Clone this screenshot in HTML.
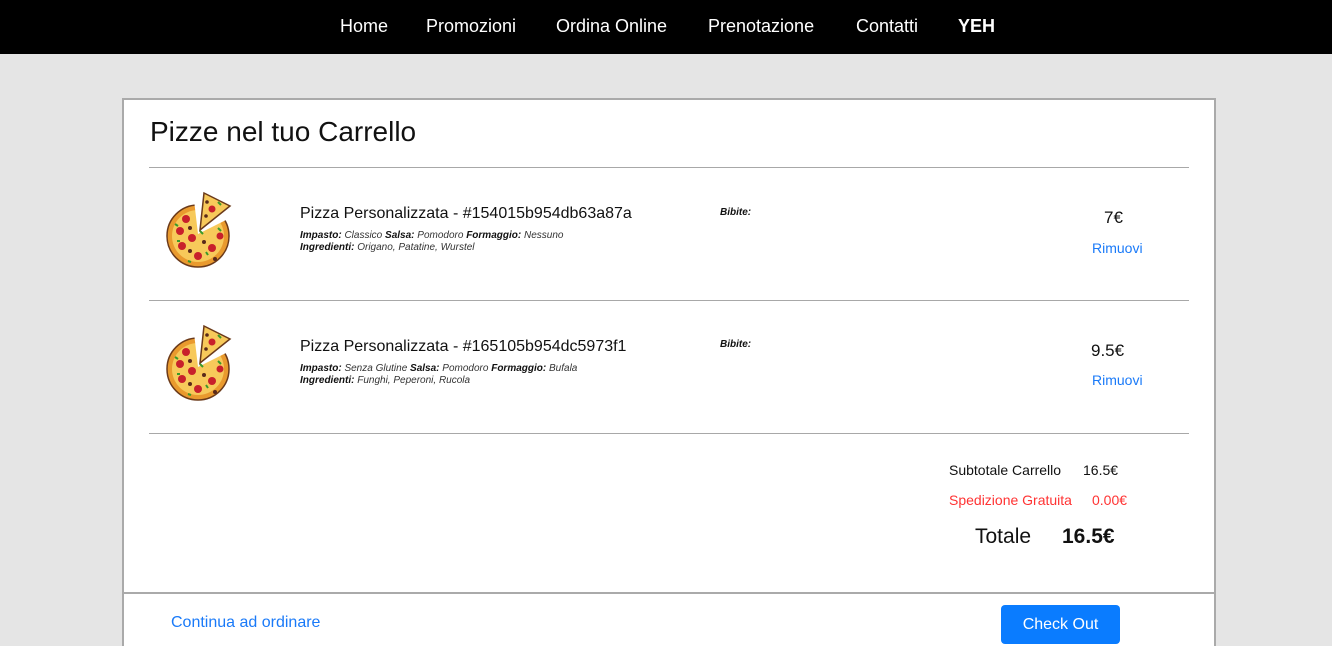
<!DOCTYPE html>
<html style="width:1332px;height:646px;overflow:hidden"><head><meta charset="utf-8"><style>
*{margin:0;padding:0;box-sizing:border-box}
body{width:1332px;height:646px;background:#e5e5e5;font-family:"Liberation Sans",sans-serif;position:relative;overflow:hidden}
.nav{position:absolute;left:0;top:0;width:1332px;height:54px;background:#000}
.nav span{position:absolute;top:16px;color:#fff;font-size:18px}
.card{position:absolute;left:122px;top:98px;width:1094px;height:548px;background:#fff;border:2px solid #aaa;border-bottom:none}
.abs{position:absolute}
.hr{position:absolute;left:149px;width:1040px;height:1px;background:#a8a8a8}
.t{color:#111}
.small{font-size:10px;font-style:italic;color:#333;line-height:12px}
.small b{color:#111}
a{color:#1a7af8;text-decoration:none}
</style></head><body>
<div class="nav">
<span style="left:340px">Home</span>
<span style="left:426px">Promozioni</span>
<span style="left:556px">Ordina Online</span>
<span style="left:708px">Prenotazione</span>
<span style="left:856px">Contatti</span>
<span style="left:958px;font-weight:bold">YEH</span>
</div>
<div class="card"></div>
<div class="abs" style="left:122px;top:592px;width:1094px;height:2px;background:#aaa"></div>
<div class="abs t" style="left:150px;top:116px;font-size:28px">Pizze nel tuo Carrello</div>
<div class="hr" style="top:167px"></div>
<div class="hr" style="top:300px"></div>
<div class="hr" style="top:433px"></div>

<svg class="abs" style="left:160px;top:186px" width="80" height="85" viewBox="0 0 80 85" id="p1">
<circle cx="38" cy="50" r="31" fill="#e99a2e" stroke="#6b3a1a" stroke-width="1.5"/>
<circle cx="38" cy="50" r="26" fill="#f7c95a"/>
<polygon points="38,48 34,14 78,28" fill="#fff"/>
<polygon points="44,7 70,20 40,44" fill="#f7c95a" stroke="#6b3a1a" stroke-width="1.5"/>
<g fill="#c8202b"><circle cx="26" cy="33" r="4"/><circle cx="20" cy="45" r="4"/><circle cx="32" cy="52" r="4"/><circle cx="22" cy="60" r="4"/><circle cx="38" cy="70" r="4"/><circle cx="52" cy="62" r="4"/><circle cx="60" cy="50" r="3.5"/><circle cx="52" cy="23" r="3.5"/></g>
<g fill="#5a2a1a"><circle cx="30" cy="42" r="2"/><circle cx="44" cy="56" r="2"/><circle cx="30" cy="65" r="2"/><circle cx="55" cy="73" r="2"/><circle cx="47" cy="16" r="1.8"/><circle cx="46" cy="30" r="1.8"/></g>
<g stroke="#3a9a2a" stroke-width="2"><line x1="15" y1="38" x2="18" y2="40"/><line x1="40" y1="45" x2="43" y2="48"/><line x1="58" y1="42" x2="61" y2="45"/><line x1="28" y1="75" x2="31" y2="76"/><line x1="46" y1="66" x2="48" y2="69"/><line x1="58" y1="16" x2="61" y2="19"/><line x1="17" y1="55" x2="20" y2="55"/></g>
</svg>
<svg class="abs" style="left:160px;top:319px" width="80" height="85" viewBox="0 0 80 85">
<use href="#p1"/>
</svg>

<div class="abs t" style="left:300px;top:205px;font-size:16px">Pizza Personalizzata - #154015b954db63a87a</div>
<div class="abs small" style="left:300px;top:230px"><b>Impasto:</b> Classico <b>Salsa:</b> Pomodoro <b>Formaggio:</b> Nessuno<br><b>Ingredienti:</b> Origano, Patatine, Wurstel</div>
<div class="abs small" style="left:720px;top:207px"><b>Bibite:</b></div>
<div class="abs t" style="left:1104px;top:208px;font-size:17px">7€</div>
<div class="abs" style="left:1092px;top:240px;font-size:14px"><a>Rimuovi</a></div>

<div class="abs t" style="left:300px;top:338px;font-size:16px">Pizza Personalizzata - #165105b954dc5973f1</div>
<div class="abs small" style="left:300px;top:363px"><b>Impasto:</b> Senza Glutine <b>Salsa:</b> Pomodoro <b>Formaggio:</b> Bufala<br><b>Ingredienti:</b> Funghi, Peperoni, Rucola</div>
<div class="abs small" style="left:720px;top:339px"><b>Bibite:</b></div>
<div class="abs t" style="left:1091px;top:341px;font-size:17px">9.5€</div>
<div class="abs" style="left:1092px;top:372px;font-size:14px"><a>Rimuovi</a></div>

<div class="abs t" style="left:949px;top:462px;font-size:14px">Subtotale Carrello</div>
<div class="abs t" style="left:1083px;top:462px;font-size:14px">16.5€</div>
<div class="abs" style="left:949px;top:492px;font-size:14px;color:#f33">Spedizione Gratuita</div>
<div class="abs" style="left:1092px;top:492px;font-size:14px;color:#f33">0.00€</div>
<div class="abs t" style="left:975px;top:525px;font-size:21px">Totale</div>
<div class="abs t" style="left:1062px;top:525px;font-size:21px;font-weight:bold">16.5€</div>

<div class="abs" style="left:171px;top:614px;font-size:16px"><a>Continua ad ordinare</a></div>
<div class="abs" style="left:1001px;top:605px;width:119px;height:39px;background:#0a7cff;border-radius:4px;color:#fff;font-size:16px;text-align:center;line-height:39px">Check Out</div>
</body></html>
